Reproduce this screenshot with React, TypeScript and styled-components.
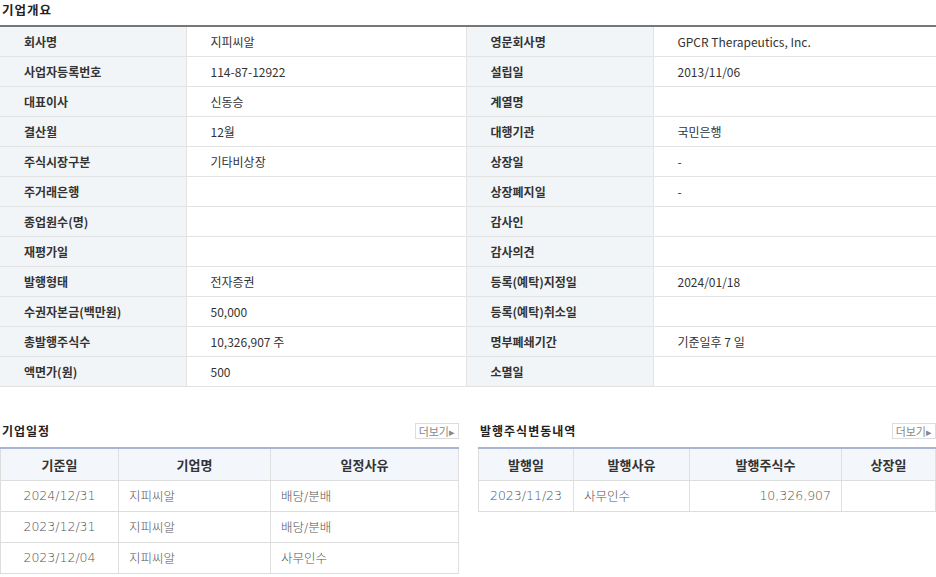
import React from "react";
import styled, { createGlobalStyle } from "styled-components";

const Global = createGlobalStyle`
  body { margin: 0; background: #fff; font-family: "Noto Sans CJK KR", "Noto Sans", sans-serif; color: #333; }
`;
const Page = styled.div`width: 936px; padding-top: 0;`;
const Title = styled.div`font-size: 12.5px; font-weight: 600; color: #222; height: 25px; line-height: 20px; padding-left: 2px; letter-spacing: 1px;`;
const Info = styled.table`
  width: 100%; border-collapse: collapse; border-top: 2px solid #777; table-layout: fixed;
  td { height: 30px; padding: 0; font-size: 12px; border-bottom: 1px solid #e3e3e3; box-sizing: border-box; }
`;
const Th = styled.td`background: #f2f5f8; font-weight: 600; color: #333; padding-left: 24px !important; border-right: 1px solid #e3e3e3;`;
const Td = styled.td<{ $edge?: boolean }>`padding-left: 24px !important; color: #333; ${p => p.$edge ? "border-right: 1px solid #e3e3e3;" : ""}`;
const Bottom = styled.div`display: flex; justify-content: space-between; margin-top: 28px;`;
const Panel = styled.div<{ $w: number }>`width: ${p => p.$w}px;`;
const PanelHead = styled.div`display: flex; justify-content: space-between; align-items: center; height: 32px;`;
const PTitle = styled.div`font-size: 12px; font-weight: 600; color: #222; letter-spacing: 1px; padding-left: 2px;`;
const More = styled.span`font-size: 11px; color: #888; border: 1px solid #ddd; padding: 0 3px; line-height: 14px; letter-spacing: 0;`;
const Grid = styled.table`
  width: 100%; border-collapse: collapse; border-top: 2px solid #a9b6d3; table-layout: fixed;
  border-left: 1px solid #ddd; border-right: 1px solid #ddd;
  th { background: #f3f6fa; font-size: 13px; font-weight: 600; color: #333; height: 29px; border-right: 1px solid #e0e0e0; border-bottom: 1px solid #ddd; }
  td { height: 30px; font-size: 12.5px; color: #555; border-right: 1px solid #e0e0e0; border-bottom: 1px solid #ddd; padding: 0 10px; font-family: "DejaVu Sans", "Noto Sans CJK KR", sans-serif; font-weight: 300; }
`;
const C = styled.td<{ $a?: string }>`text-align: ${p => p.$a || "left"};`;

const rows: [string, string, string, string][] = [
  ["회사명", "지피씨알", "영문회사명", "GPCR Therapeutics, Inc."],
  ["사업자등록번호", "114-87-12922", "설립일", "2013/11/06"],
  ["대표이사", "신동승", "계열명", ""],
  ["결산월", "12월", "대행기관", "국민은행"],
  ["주식시장구분", "기타비상장", "상장일", "-"],
  ["주거래은행", "", "상장폐지일", "-"],
  ["종업원수(명)", "", "감사인", ""],
  ["재평가일", "", "감사의견", ""],
  ["발행형태", "전자증권", "등록(예탁)지정일", "2024/01/18"],
  ["수권자본금(백만원)", "50,000", "등록(예탁)취소일", ""],
  ["총발행주식수", "10,326,907 주", "명부폐쇄기간", "기준일후 7 일"],
  ["액면가(원)", "500", "소멸일", ""],
];

export default function App() {
  return (
    <Page>
      <Global />
      <Title>기업개요</Title>
      <Info>
        <colgroup><col style={{ width: 186 }} /><col style={{ width: 280 }} /><col style={{ width: 187 }} /><col /></colgroup>
        <tbody>
          {rows.map(r => (
            <tr key={r[0]}><Th>{r[0]}</Th><Td $edge>{r[1]}</Td><Th>{r[2]}</Th><Td>{r[3]}</Td></tr>
          ))}
        </tbody>
      </Info>
      <Bottom>
        <Panel $w={459}>
          <PanelHead><PTitle>기업일정</PTitle><More>더보기▸</More></PanelHead>
          <Grid>
            <colgroup><col style={{ width: 118 }} /><col style={{ width: 152 }} /><col /></colgroup>
            <thead><tr><th>기준일</th><th>기업명</th><th>일정사유</th></tr></thead>
            <tbody>
              {[["2024/12/31", "배당/분배"], ["2023/12/31", "배당/분배"], ["2023/12/04", "사무인수"]].map(r => (
                <tr key={r[0]}><C $a="center">{r[0]}</C><C>지피씨알</C><C>{r[1]}</C></tr>
              ))}
            </tbody>
          </Grid>
        </Panel>
        <Panel $w={458}>
          <PanelHead><PTitle>발행주식변동내역</PTitle><More>더보기▸</More></PanelHead>
          <Grid>
            <colgroup><col style={{ width: 95 }} /><col style={{ width: 116 }} /><col style={{ width: 152 }} /><col /></colgroup>
            <thead><tr><th>발행일</th><th>발행사유</th><th>발행주식수</th><th>상장일</th></tr></thead>
            <tbody><tr><C $a="center">2023/11/23</C><C>사무인수</C><C $a="right">10,326,907</C><C></C></tr></tbody>
          </Grid>
        </Panel>
      </Bottom>
    </Page>
  );
}
